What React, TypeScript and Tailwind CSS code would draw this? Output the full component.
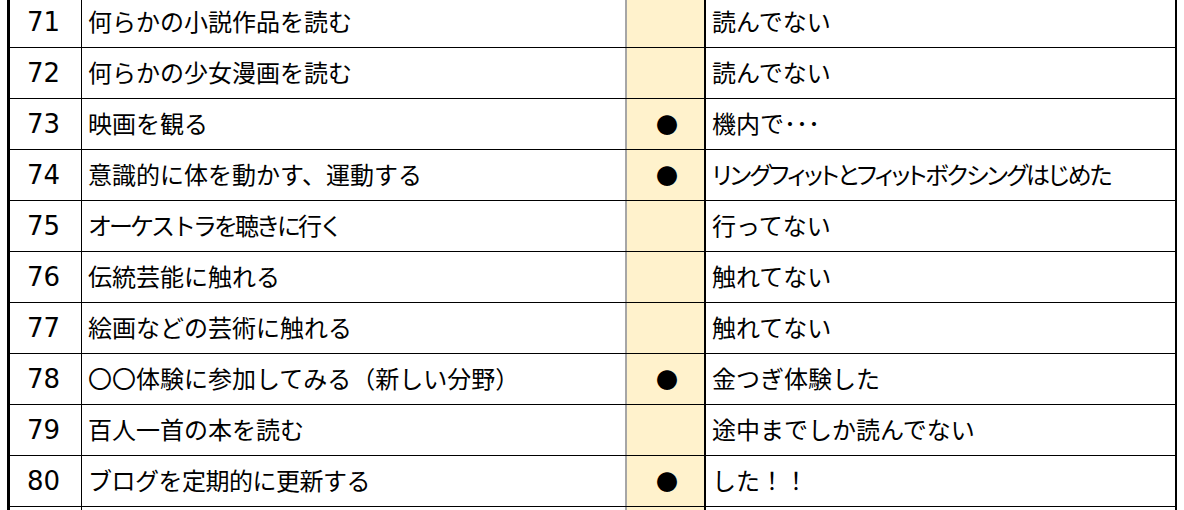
const rows = [
  { no: 71, item: "何らかの小説作品を読む", done: false, note: "読んでない" },
  { no: 72, item: "何らかの少女漫画を読む", done: false, note: "読んでない" },
  { no: 73, item: "映画を観る", done: true, note: "機内で･･･" },
  {
    no: 74,
    item: "意識的に体を動かす、運動する",
    done: true,
    note: "リングフィットとフィットボクシングはじめた",
    noteCls: "[font-feature-settings:'palt'] tracking-[-1.8px]",
  },
  { no: 75, item: "オーケストラを聴きに行く", itemCls: "tracking-[-3px]", done: false, note: "行ってない" },
  { no: 76, item: "伝統芸能に触れる", done: false, note: "触れてない" },
  { no: 77, item: "絵画などの芸術に触れる", done: false, note: "触れてない" },
  { no: 78, item: "〇〇体験に参加してみる（新しい分野）", done: true, note: "金つぎ体験した" },
  { no: 79, item: "百人一首の本を読む", done: false, note: "途中までしか読んでない" },
  { no: 80, item: "ブログを定期的に更新する", itemCls: "tracking-[-0.5px]", done: true, note: "した！！" },
];

const App = () => {
  return (
    <div className="w-[1184px] h-[510px] overflow-hidden bg-white">
      <div className="ml-[7px] -mt-[3px] w-[1170px] border-l-[3px] border-r-2 border-black text-black text-[24px] font-['Noto_Sans_CJK_JP',sans-serif]">
        {rows.map((r) => (
          <div key={r.no} className="flex h-[51px] border-b border-black">
            <div className="w-[72px] shrink-0 border-r border-black flex items-center justify-center pr-[4px] font-['DejaVu_Sans',sans-serif] text-[26px]">
              {r.no}
            </div>
            <div className={"w-[545px] shrink-0 border-r-2 border-[#a6a6a6] flex items-center pl-[6px] pb-[2px] whitespace-nowrap " + (r.itemCls ?? "")}>
              {r.item}
            </div>
            <div className="w-[79px] shrink-0 border-r-2 border-black bg-[#fff2cc] flex items-center justify-center pl-[3px] pb-[1px] text-[22px]">
              {r.done ? "●" : ""}
            </div>
            <div className={"flex-1 flex items-center pl-[6px] pb-[2px] whitespace-nowrap " + (r.noteCls ?? "")}>
              {r.note}
            </div>
          </div>
        ))}
        {/* next row, cut off */}
        <div className="flex h-[51px]">
          <div className="w-[72px] shrink-0 border-r border-black" />
          <div className="w-[545px] shrink-0 border-r-2 border-[#a6a6a6]" />
          <div className="w-[79px] shrink-0 border-r-2 border-black bg-[#fff2cc]" />
          <div className="flex-1" />
        </div>
      </div>
    </div>
  );
};

export default App;
